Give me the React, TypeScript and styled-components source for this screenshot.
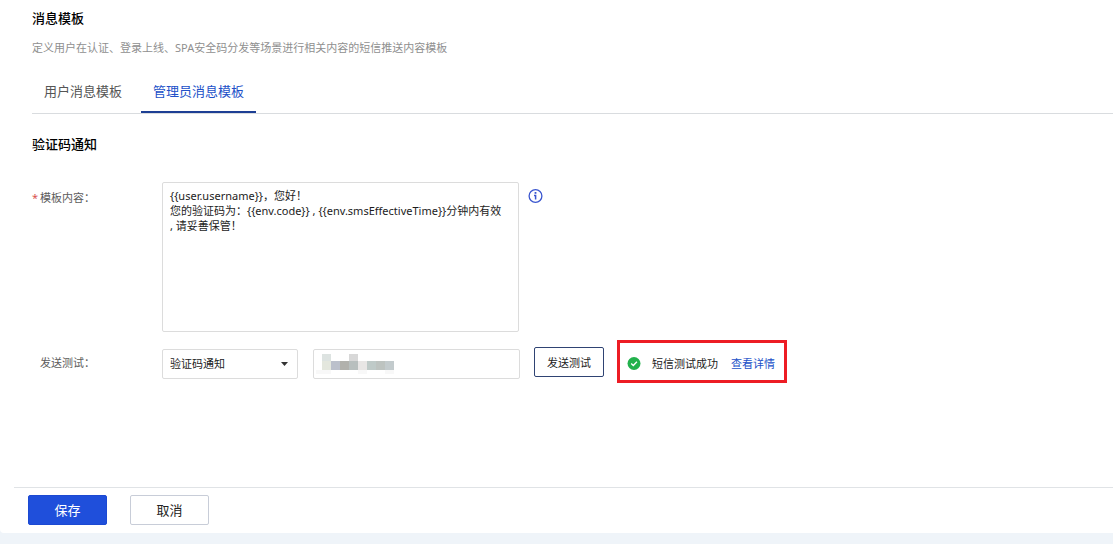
import React from 'react';
import styled, { createGlobalStyle } from 'styled-components';

const GlobalStyle = createGlobalStyle`
  *, *::before, *::after { box-sizing: border-box; }
  body {
    margin: 0;
    background: #eff4f9;
    color: #1c1c1c;
    font-family: "Noto Sans", "Noto Sans CJK SC", sans-serif;
    font-size: 11px;
    line-height: 15px;
  }
  button, input, select, textarea { font: inherit; color: inherit; }
`;

const Page = styled.div`
  min-height: 100vh;
  padding-bottom: 11px;
  display: flex;
  flex-direction: column;
`;

const Panel = styled.main`
  flex: 1;
  display: flex;
  flex-direction: column;
  background: #fff;
  border-bottom-left-radius: 4px;
`;

const Content = styled.div`
  flex: 1;
  padding: 8px 0 24px 32px;
`;

const Title = styled.h1`
  margin: 0;
  font-size: 13px;
  line-height: 20px;
  font-weight: 500;
  color: #000;
`;

const Description = styled.p`
  margin: 12px 0 0;
  color: #8f8f8f;
`;

const Tabs = styled.div`
  display: flex;
  gap: 7px;
  margin-top: 15px;
  border-bottom: 1px solid #d9dcdf;
`;

const Tab = styled.button<{ $active?: boolean }>`
  height: 43px;
  padding: 2px 12px 0;
  border: 0;
  border-bottom: 2px solid ${(p) => (p.$active ? '#1d3f94' : 'transparent')};
  background: none;
  font-size: 13px;
  color: ${(p) => (p.$active ? '#2150c8' : '#555')};
  cursor: pointer;
`;

const SectionTitle = styled.h2`
  margin: 20px 0 0;
  font-size: 13px;
  line-height: 20px;
  font-weight: 500;
  color: #000;
`;

const TemplateRow = styled.div`
  display: flex;
  align-items: flex-start;
  margin-top: 28px;
`;

const TestRow = styled.div`
  display: flex;
  align-items: center;
  flex-wrap: wrap;
  margin-top: 8px;
`;

const Label = styled.label<{ $top?: boolean }>`
  flex: none;
  width: 130px;
  padding-left: 8px;
  padding-top: ${(p) => (p.$top ? '8px' : '2px')};
  color: #5c5c5c;
`;

const Required = styled.span`
  display: inline-block;
  width: 8px;
  margin-left: -8px;
  color: #d9534f;
`;

const TemplateText = styled.textarea`
  display: block;
  width: 357px;
  height: 150px;
  padding: 5px 7px;
  border: 1px solid #dcdcdc;
  border-radius: 2px;
  background: #fff;
  resize: none;
  outline: none;
`;

const InfoButton = styled.button`
  display: flex;
  margin: 6px 0 0 8px;
  padding: 0;
  border: 0;
  background: none;
  cursor: pointer;
`;

const Fields = styled.div`
  display: flex;
  gap: 15px;
  padding-top: 4px;
`;

const SelectWrap = styled.div`
  position: relative;
  width: 136px;
  svg {
    position: absolute;
    top: 13px;
    right: 10px;
    pointer-events: none;
  }
`;

const Select = styled.select`
  appearance: none;
  display: block;
  width: 100%;
  height: 30px;
  padding: 0 24px 0 7px;
  border: 1px solid #dcdcdc;
  border-radius: 2px;
  background: #fff;
  outline: none;
`;

const PhoneWrap = styled.div`
  position: relative;
  width: 207px;
  svg {
    position: absolute;
    top: 5px;
    left: 3px;
    pointer-events: none;
  }
`;

const PhoneInput = styled.input`
  display: block;
  width: 100%;
  height: 30px;
  padding: 0 7px;
  border: 1px solid #dcdcdc;
  border-radius: 2px;
  background: #fff;
  outline: none;
`;

const TestButton = styled.button`
  width: 70px;
  height: 30px;
  margin-left: 14px;
  padding: 2px 0 0;
  border: 1px solid #2f4373;
  border-radius: 2px;
  background: #fff;
  cursor: pointer;
`;

const Result = styled.div`
  display: flex;
  align-items: center;
  height: 43px;
  margin-left: 13px;
  padding: 4px 9px 0 7px;
  border: 3px solid #ed1c24;
  white-space: nowrap;
`;

const ResultText = styled.span`
  margin: 0 13px 0 11px;
`;

const DetailLink = styled.a`
  color: #2150c8;
  text-decoration: none;
`;

const Footer = styled.footer`
  display: flex;
  gap: 23px;
  margin-left: 14px;
  padding: 7px 14px 8px;
  border-top: 1px solid #e0e3e6;
`;

const FooterButton = styled.button<{ $primary?: boolean }>`
  width: 79px;
  height: 30px;
  padding: 0;
  border: 1px solid ${(p) => (p.$primary ? '#1c49d2' : '#c8cdd8')};
  border-radius: 2px;
  background: ${(p) => (p.$primary ? '#1f4fdb' : '#fff')};
  color: ${(p) => (p.$primary ? '#fff' : '#222')};
  font-size: 13px;
  cursor: pointer;
`;

const template =
  '{{user.username}}，您好！\n您的验证码为：{{env.code}} , {{env.smsEffectiveTime}}分钟内有效\n, 请妥善保管！';

const maskedBlocks: [number, number, number, number, string][] = [
  [6, 0, 9, 7, '#dde3e1'],
  [33, 0, 9, 7, '#d8d8d8'],
  [6, 7, 9, 9, '#e4e7de'],
  [15, 7, 9, 9, '#bbc0cb'],
  [24, 7, 9, 9, '#b1b1ac'],
  [33, 7, 9, 9, '#b8bfbe'],
  [42, 7, 9, 9, '#e8e6e5'],
  [51, 7, 9, 9, '#bfcac8'],
  [60, 7, 9, 9, '#bdc3c0'],
  [69, 7, 9, 9, '#c3cbcd'],
  [0, 16, 15, 4, '#f8f8f8'],
  [42, 16, 9, 4, '#f8f8f8'],
  [69, 16, 9, 4, '#f8f8f8'],
];

export default function App() {
  return (
    <>
      <GlobalStyle />
      <Page>
        <Panel>
          <Content>
            <Title>消息模板</Title>
            <Description>
              定义用户在认证、登录上线、SPA安全码分发等场景进行相关内容的短信推送内容模板
            </Description>
            <Tabs role="tablist">
              <Tab role="tab" aria-selected={false}>用户消息模板</Tab>
              <Tab role="tab" aria-selected $active>管理员消息模板</Tab>
            </Tabs>
            <SectionTitle>验证码通知</SectionTitle>
            <TemplateRow>
              <Label htmlFor="template" $top>
                <Required>*</Required>模板内容：
              </Label>
              <TemplateText id="template" defaultValue={template} spellCheck={false} />
              <InfoButton aria-label="说明">
                <svg width="16" height="16" viewBox="0 0 16 16" fill="none">
                  <circle cx="8.5" cy="8" r="6.4" stroke="#3a56cf" strokeWidth="1.3" />
                  <rect x="7.6" y="4" width="1.8" height="1.8" fill="#3a56cf" />
                  <path d="M7 7.4H8.6V11.6" stroke="#3a56cf" strokeWidth="1.5" />
                </svg>
              </InfoButton>
            </TemplateRow>
            <TestRow>
              <Label htmlFor="scene">发送测试：</Label>
              <Fields>
                <SelectWrap>
                  <Select id="scene" defaultValue="code">
                    <option value="code">验证码通知</option>
                  </Select>
                  <svg width="7" height="4" viewBox="0 0 7 4">
                    <path d="M0 0H7L3.5 4Z" fill="#333" />
                  </svg>
                </SelectWrap>
                <PhoneWrap>
                  <PhoneInput type="tel" aria-label="手机号" />
                  <svg width="78" height="20" viewBox="0 0 78 20" shapeRendering="crispEdges">
                    {maskedBlocks.map(([x, y, w, h, fill]) => (
                      <rect key={`${x}-${y}`} x={x} y={y} width={w} height={h} fill={fill} />
                    ))}
                  </svg>
                </PhoneWrap>
              </Fields>
              <TestButton>发送测试</TestButton>
              <Result role="status">
                <svg width="14" height="14" viewBox="0 0 14 14" fill="none">
                  <circle cx="7" cy="6.5" r="6.5" fill="#22b14c" />
                  <path d="M4.2 6.5L6.3 8.5L9.9 4.8" stroke="#fff" strokeWidth="1.3" />
                </svg>
                <ResultText>短信测试成功</ResultText>
                <DetailLink href="#detail">查看详情</DetailLink>
              </Result>
            </TestRow>
          </Content>
          <Footer>
            <FooterButton $primary>保存</FooterButton>
            <FooterButton>取消</FooterButton>
          </Footer>
        </Panel>
      </Page>
    </>
  );
}
